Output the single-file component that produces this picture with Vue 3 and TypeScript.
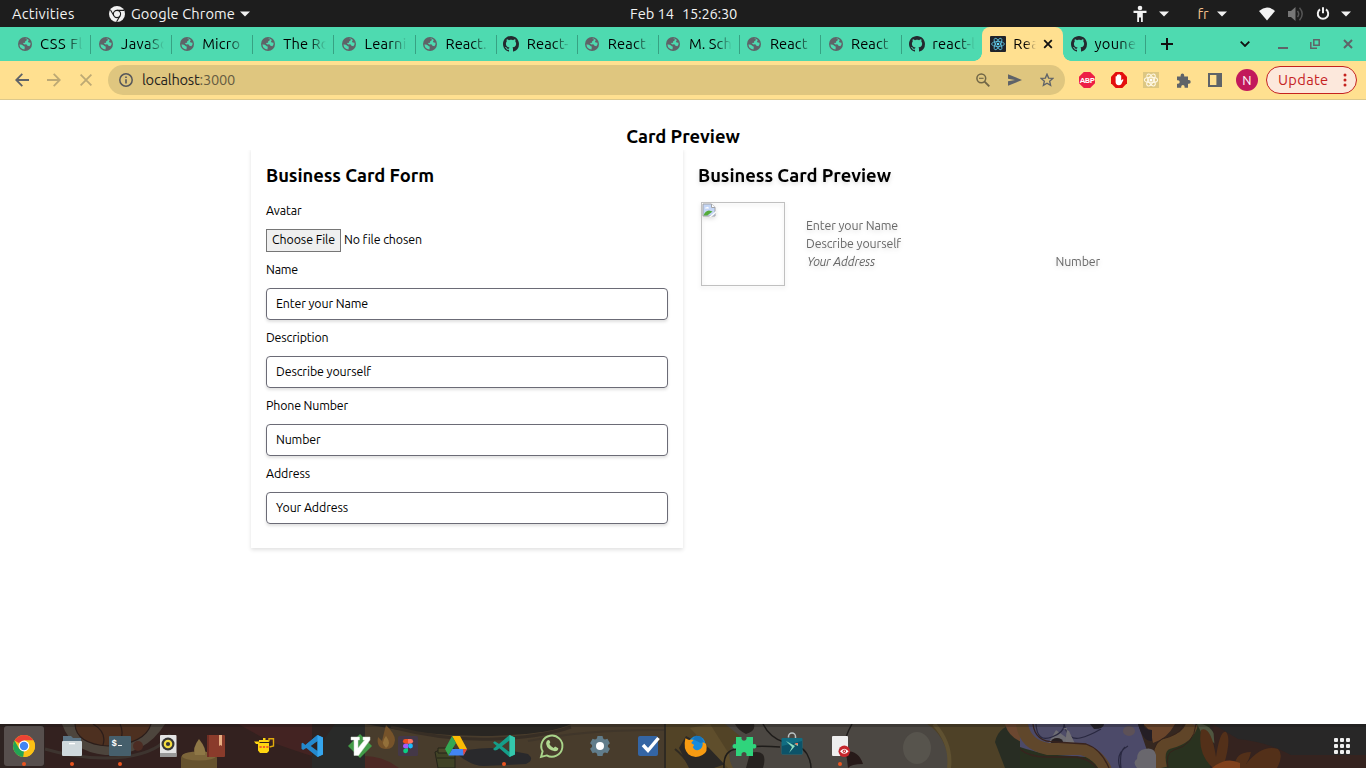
<script setup lang="ts">
import { reactive } from 'vue'

interface Tab {
  title: string
  width: number
  icon: 'globe' | 'github' | 'react'
  active?: boolean
}

interface Field {
  key: 'name' | 'description' | 'phone' | 'address'
  label: string
  labelWidth: number
}

const tabs: Tab[] = [
  { title: 'CSS Fl', width: 43, icon: 'globe' },
  { title: 'JavaSc', width: 46, icon: 'globe' },
  { title: 'Micro', width: 38, icon: 'globe' },
  { title: 'The Ro', width: 46, icon: 'globe' },
  { title: 'Learni', width: 42, icon: 'globe' },
  { title: 'React.', width: 41, icon: 'globe' },
  { title: 'React-', width: 42, icon: 'github' },
  { title: 'React -', width: 46, icon: 'globe' },
  { title: 'M. Sch', width: 43, icon: 'globe' },
  { title: 'React', width: 37.5, icon: 'globe' },
  { title: 'React', width: 37.5, icon: 'globe' },
  { title: 'react-l', width: 43, icon: 'github' },
  { title: 'Rea', width: 26, icon: 'react', active: true },
  { title: 'youne', width: 42, icon: 'github' },
]

const fields: Field[] = [
  { key: 'name', label: 'Name', labelWidth: 32 },
  { key: 'description', label: 'Description', labelWidth: 62.5 },
  { key: 'phone', label: 'Phone Number', labelWidth: 82 },
  { key: 'address', label: 'Address', labelWidth: 44 },
]

const card = reactive({
  name: { text: 'Enter your Name', width: 92 },
  description: { text: 'Describe yourself', width: 95 },
  phone: { text: 'Number', width: 44.5 },
  address: { text: 'Your Address', width: 72 },
})

// Tracks a line of text so that it fills the given width.
const vFit = {
  mounted(el: HTMLElement, binding: { value: number }) {
    const count = (el.textContent ?? '').length
    const natural = el.getBoundingClientRect().width
    el.style.letterSpacing = `${(binding.value - natural) / count}px`
  },
}
</script>

<template>
  <div class="desktop">
    <header class="topbar">
      <span class="activities"><span v-fit="62.5">Activities</span></span>
      <svg class="chrome-mono" width="16" height="16" viewBox="0 0 16 16">
        <circle cx="8" cy="8" r="8" fill="#f2f2f2" />
        <circle cx="8" cy="8" r="3.6" fill="none" stroke="#1d1d1d" stroke-width="1.1" />
        <path d="M8 4.4h7M4.9 9.8 1.5 3.9M11.1 9.8 7.6 15.8" stroke="#1d1d1d" stroke-width="1.1" />
      </svg>
      <span class="appname"><span v-fit="104">Google Chrome</span></span>
      <svg class="caret" width="10" height="6" viewBox="0 0 10 6"><path d="M0 .5h10L5 5.5z" fill="#f2f2f2" /></svg>
      <div class="clock"><span v-fit="44">Feb 14</span><span v-fit="55">15:26:30</span></div>
      <div class="status">
        <svg width="14" height="18" viewBox="0 0 14 18" fill="#f2f2f2">
          <circle cx="7" cy="3" r="2.3" /><path d="M.5 5.8h13v2.1H9.8V17H8v-4.5H6V17H4.2V7.9H.5z" />
        </svg>
        <svg class="c1" width="10" height="6" viewBox="0 0 10 6"><path d="M0 .5h10L5 5.5z" fill="#f2f2f2" /></svg>
        <span class="lang"><span v-fit="11">fr</span></span>
        <svg class="c2" width="10" height="6" viewBox="0 0 10 6"><path d="M0 .5h10L5 5.5z" fill="#f2f2f2" /></svg>
        <svg class="wifi" width="16" height="14" viewBox="0 0 16 14"><path d="M0 4Q8-3 16 4L8 13.5z" fill="#f2f2f2" /></svg>
        <svg class="volume" width="16" height="16" viewBox="0 0 16 16">
          <path d="M0 5h3l4.5-4v14L3 11H0z" fill="#777" />
          <path d="M9.5 5q2.4 3 0 6M11.5 1.8q5.4 6.2 0 12.4" fill="none" stroke="#555" stroke-width="1.5" />
        </svg>
        <svg class="power" width="14" height="14" viewBox="0 0 14 14" fill="none" stroke="#f2f2f2" stroke-width="2">
          <path d="M4 2.4a5.2 5.2 0 1 0 6 0M7 .3v6" />
        </svg>
        <svg class="c3" width="10" height="6" viewBox="0 0 10 6"><path d="M0 .5h10L5 5.5z" fill="#f2f2f2" /></svg>
      </div>
    </header>

    <nav class="tabstrip">
      <div v-for="(tab, i) in tabs" :key="i" class="tab" :class="{ active: tab.active, bare: i === 11 }">
        <svg v-if="tab.icon === 'globe'" class="favicon" width="16" height="16" viewBox="0 0 16 16">
          <circle cx="8" cy="8" r="7" fill="#5f6368" />
          <path d="M2.4 8.5Q4.8 8.2 6 9.6T7.8 10.4L7.5 13.6Q2.9 13 2.4 8.5ZM7.9 2.5 9.9 2.6 9.6 4.4 8.2 5.2 8 6.7 5.8 7.1 7.3 8.4 9.3 8.3 10.5 9.8 12.4 10.3Q14 8.6 13.5 6.7L11.6 6.5 10.9 5.2 12 4.1Q10.4 2.5 7.9 2.5Z" fill="#4edab0" />
        </svg>
        <svg v-else-if="tab.icon === 'github'" class="favicon" width="16" height="16" viewBox="0 0 16 16">
          <path fill="#24292f" d="M8 0C3.58 0 0 3.58 0 8c0 3.54 2.29 6.53 5.47 7.59.4.07.55-.17.55-.38 0-.19-.01-.82-.01-1.49-2.01.37-2.53-.49-2.69-.94-.09-.23-.48-.94-.82-1.13-.28-.15-.68-.52-.01-.53.63-.01 1.08.58 1.23.82.72 1.21 1.87.87 2.33.66.07-.52.28-.87.51-1.07-1.78-.2-3.64-.89-3.64-3.95 0-.87.31-1.59.82-2.15-.08-.2-.36-1.02.08-2.12 0 0 .67-.21 2.2.82.64-.18 1.32-.27 2-.27s1.36.09 2 .27c1.53-1.04 2.2-.82 2.2-.82.44 1.1.16 1.92.08 2.12.51.56.82 1.27.82 2.15 0 3.07-1.87 3.75-3.65 3.95.29.25.54.73.54 1.48 0 1.07-.01 1.93-.01 2.2 0 .21.15.46.55.38A8.01 8.01 0 0 0 16 8c0-4.42-3.58-8-8-8z" />
        </svg>
        <svg v-else class="favicon" width="16" height="16" viewBox="0 0 16 16">
          <rect width="16" height="16" rx="1" fill="#20232a" />
          <g fill="none" stroke="#61c9e8" stroke-width=".8">
            <ellipse cx="8" cy="8" rx="6.4" ry="2.5" />
            <ellipse cx="8" cy="8" rx="6.4" ry="2.5" transform="rotate(60 8 8)" />
            <ellipse cx="8" cy="8" rx="6.4" ry="2.5" transform="rotate(120 8 8)" />
          </g>
          <circle cx="8" cy="8" r="1.3" fill="#61dafb" />
        </svg>
        <span class="tab-title"><span v-fit="tab.width">{{ tab.title }}</span></span>
        <svg v-if="tab.active" class="close" width="10" height="10" viewBox="0 0 10 10"><path d="m1.2 1.2 7.6 7.6m0-7.6L1.2 8.8" stroke="#111" stroke-width="1.8" /></svg>
      </div>
      <div class="window-tools">
        <svg class="plus" width="12" height="12" viewBox="0 0 12 12"><path d="M6 0v12M0 6h12" stroke="#111" stroke-width="2" /></svg>
        <svg class="chev" width="10" height="6" viewBox="0 0 10 6"><path d="m.7.7 4.3 4.3L9.3.7" fill="none" stroke="#111" stroke-width="1.8" /></svg>
        <svg class="min" width="10" height="10" viewBox="0 0 10 10"><path d="M0 9h10" stroke="#5f6368" stroke-width="2" /></svg>
        <svg class="restore" width="10" height="10" viewBox="0 0 10 10" fill="none" stroke="#5f6368" stroke-width="1.5"><path d="M3.8.8h5.4v5.4H3.8zM.8 3v6.2H7" /></svg>
        <svg class="quit" width="10" height="10" viewBox="0 0 10 10"><path d="m1 1 8 8m0-8L1 9" stroke="#5f6368" stroke-width="2" /></svg>
      </div>
    </nav>

    <div class="toolbar">
      <svg class="back" width="14" height="14" viewBox="0 0 14 14" fill="none" stroke="#5f6368" stroke-width="1.8"><path d="M14 7H1.5M7.3.8 1.2 7l6.1 6.2" /></svg>
      <svg class="fwd" width="14" height="14" viewBox="0 0 14 14" fill="none" stroke="#bda974" stroke-width="1.8"><path d="M0 7h12.5M6.7.8 12.8 7l-6.1 6.2" /></svg>
      <svg class="stop" width="12" height="12" viewBox="0 0 12 12" fill="none" stroke="#bda974" stroke-width="1.8"><path d="m.6.6 10.8 10.8m0-10.8L.6 11.4" /></svg>
      <div class="omnibox">
        <svg width="14" height="14" viewBox="0 0 14 14"><circle cx="7" cy="7" r="6.2" fill="none" stroke="#55565a" stroke-width="1.5" /><path d="M7 6.2v4.2M7 3.4v1.6" stroke="#55565a" stroke-width="1.6" /></svg>
        <span class="url"><span v-fit="93">localhost<span class="port">:3000</span></span></span>
        <svg class="zoom" width="14" height="14" viewBox="0 0 14 14" fill="none" stroke="#706646"><circle cx="5.3" cy="5.3" r="4.4" stroke-width="1.5" /><path d="m8.6 8.6 4.7 4.7" stroke-width="1.9" /><path d="M3 5.3h4.6" stroke-width="1.1" /></svg>
        <svg class="send" width="14" height="12" viewBox="0 0 14 12"><path d="M0 .3 14 6 0 11.7V7.2L7 6 0 4.8z" fill="#5f6368" /></svg>
        <svg class="star" width="14" height="14" viewBox="0 0 14 14"><path d="m7 1.2 1.65 3.9 4.2.35-3.2 2.8.95 4.15L7 10.2l-3.6 2.2.95-4.15-3.2-2.8 4.2-.35z" fill="none" stroke="#5f6368" stroke-width="1.35" /></svg>
      </div>
      <div class="ext abp"><span v-fit="14.5">ABP</span></div>
      <svg class="hand" width="16" height="16" viewBox="0 0 16 16">
        <path d="M4.7 0h6.6L16 4.7v6.6L11.3 16H4.7L0 11.3V4.7z" fill="#e40d0d" />
        <path d="M4.6 8.2V4.5q.7-.9 1.3 0V3q.8-.9 1.4 0v-.6q.8-.9 1.5 0v1q.8-.8 1.4 0v5l1.1-1q1-.5 1.2.3L10.3 12.3q-.8 1-2.5 1-3.2-.2-3.2-3.2z" fill="#fff" />
      </svg>
      <svg class="react-ext" width="16" height="16" viewBox="0 0 16 16">
        <rect width="16" height="16" fill="#ddc782" />
        <g fill="none" stroke="#fff8e5" stroke-width="1.1"><ellipse cx="8" cy="8" rx="6.6" ry="2.7" /><ellipse cx="8" cy="8" rx="6.6" ry="2.7" transform="rotate(60 8 8)" /><ellipse cx="8" cy="8" rx="6.6" ry="2.7" transform="rotate(120 8 8)" /></g>
        <circle cx="8" cy="8" r="1.5" fill="#fff" />
      </svg>
      <svg class="puzzle" width="15" height="15" viewBox="0 0 15 15"><path d="M1 3.6h3.6V2.4a1.8 1.8 0 0 1 3.6 0v1.2H12v3.5h.9a1.8 1.8 0 0 1 0 3.6H12v4H8.6v-1a1.7 1.7 0 0 0-3.4 0v1H1v-4h1a1.7 1.7 0 0 0 0-3.4H1z" fill="#5f6368" /></svg>
      <svg class="panel" width="14" height="14" viewBox="0 0 14 14"><path d="M0 0h14v14H0zM2 2v10h6.4V2z" fill="#5f6368" fill-rule="evenodd" /></svg>
      <div class="avatar">N</div>
      <div class="update"><span v-fit="50.5">Update</span><svg width="4" height="14" viewBox="0 0 4 14" fill="#c5221f"><circle cx="2" cy="2" r="1.5" /><circle cx="2" cy="7" r="1.5" /><circle cx="2" cy="12" r="1.5" /></svg></div>
    </div>

    <main class="page">
      <h1><span v-fit="113.5">Card Preview</span></h1>
      <div class="columns">
        <section class="form-card">
          <h2><span v-fit="168">Business Card Form</span></h2>
          <label><span v-fit="35.5">Avatar</span></label>
          <div class="file"><button type="button"><span v-fit="63">Choose File</span></button><span class="file-name"><span v-fit="77.5">No file chosen</span></span></div>
          <template v-for="field in fields" :key="field.key">
            <label><span v-fit="field.labelWidth">{{ field.label }}</span></label>
            <div class="input"><span v-fit="card[field.key].width">{{ card[field.key].text }}</span></div>
          </template>
        </section>
        <section class="preview">
          <h2><span v-fit="193">Business Card Preview</span></h2>
          <div class="preview-body">
            <div class="picture">
              <svg width="14" height="14" viewBox="0 0 14 14">
                <path d="M1 1h8.5L13 4.5V13H1z" fill="#c4d6f6" stroke="#a2a4a8" />
                <path d="M9.5 1v3.5H13" fill="#fff" stroke="#a2a4a8" />
                <path d="M3 5.5q.3-1.6 1.8-1.2 1.5-1.3 2.2 1.2z" fill="#fff" />
                <path d="M1.5 12.5Q3 8.2 7 7.5l3.5 1-5.2 4z" fill="#55ab3a" />
                <path d="m14 8-7 6h2L14 9.7z" fill="#fff" />
              </svg>
            </div>
            <div class="details">
              <div><span v-fit="92">{{ card.name.text }}</span></div>
              <div><span v-fit="95">{{ card.description.text }}</span></div>
              <div class="contact"><em><span v-fit="68">{{ card.address.text }}</span></em><span v-fit="44.5">{{ card.phone.text }}</span></div>
            </div>
          </div>
        </section>
      </div>
    </main>

    <footer class="dock">
      <svg class="wallpaper" width="1366" height="44" viewBox="0 0 1366 44">
        <rect width="1366" height="44" fill="#2e2321" />
        <path d="M45 0h265v44H45z" fill="#33211f" />
        <path d="M62 0Q72 28 105 31 145 32 165 0z" fill="#4d453d" />
        <path d="M75 0Q76 20 108 22 145 20 151 0z" fill="#4d3020" />
        <path d="M75 0Q76 20 108 22 145 20 151 0M93 0q14 8 10 21M120 0q5 10-2 21" fill="none" stroke="#2b1d1a" stroke-width="1.2" />
        <path d="M45 25q40 12 80 8 35-5 45-23" fill="none" stroke="#3d342f" stroke-width="3" />
        <circle cx="138" cy="22" r="5" fill="#4c2c23" />
        <path d="M181 44v-10q0-6 18-6t18 6v10z" fill="#66522e" /><ellipse cx="199" cy="32" rx="17" ry="4.5" fill="#7c653a" />
        <path d="M199 15q8 10 6 16h-10q-3-7 4-16z" fill="#8e7746" />
        <path d="M238 0h74v32Q280 22 265 15z" fill="#432322" />
        <path d="M312 32 335 0h30v44h-53z" fill="#292a29" />
        <path d="M365 0h300v44H365z" fill="#483c2c" />
        <path d="M365 0h206q-20 10-80 12-60 1-126-12z" fill="#292622" />
        <path d="M391 3q55 14 104 12 48-2 76-12" fill="none" stroke="#372e25" stroke-width="3" />
        <path d="M386 1q9 9 9 15-1 10-10 9-9-1-7-12l4 4z" fill="#76532a" />
        <path d="M386 12q6 8 0 12-6-5 0-12z" fill="#93703a" />
        <path d="M365 32q18 0 34 12h-34z" fill="#4d2924" />
        <path d="M435 28q10-6 20 0v16h-17z" fill="#414326" stroke="#242419" /><path d="M437 34h18M438 24h16v5h-16z" fill="#4c492b" stroke="#242419" />
        <path d="M457 30q13-7 40-6l31 6q7 6-2 10l-42 2q-13 0-27-12z" fill="#29292c" />
        <path d="M528 17q60-12 137-11" fill="none" stroke="#40362a" stroke-width="2" />
        <path d="M665 0h85v44h-85z" fill="#524326" /><path d="M665 0v44M675 25q10 8 16 19" stroke="#2f2a22" stroke-width="2" fill="none" />
        <path d="m686 12 48 25-20 7h-25l-10-20z" fill="#2b2825" /><path d="m690 4 38 40h10L710 0z" fill="#5f4e2c" />
        <path d="M725 0h225v44H733q-10-18 7-32z" fill="#4b4742" />
        <path d="M735 0h19q2 7-8 10-8-4-11-10zm15 29q19-5 13 15h-17z" fill="#272320" />
        <path d="M763 0q7 14 21 18 18 3 23 12 4 7 4 14M724 44q-1-18 13-19 14-4 43-2M852 0q-12 21-5 33" fill="none" stroke="#1e1c1a" stroke-width="1.5" />
        <path d="M846 27q13 0 17 13-12 0-15 4z" fill="#271a19" />
        <ellipse cx="917" cy="24" rx="14" ry="16" fill="#57544d" />
        <path d="M927 0h94v44h-71q-3-32-23-44z" fill="#4e4127" /><path d="M934 0q18 20 15 44" fill="none" stroke="#5f5131" stroke-width="4" />
        <path d="M995 18q4-18 25-18v44h-15z" fill="#282d23" />
        <path d="M1005 0h22v20q-18-5-22-20z" fill="#6b4730" />
        <path d="M1020 0h190v44h-190z" fill="#4c4a69" />
        <path d="M1033 0h67q-8 18-25 20l-21-6-13 6z" fill="#4e4c68" /><path d="m1056 6 19 14h-27z" fill="#6d6c73" />
        <path d="M1036 0q1 19 16 13 13-5 12-13 4 17 16 14 9-2 21-9M1125 23q-6 5-4 21M1120 44q-5-15 8-22" fill="none" stroke="#292840" stroke-width="1.2" />
        <path d="M1063 4h4l-2 18h11l-7-15z" fill="#716f74" /><ellipse cx="1057" cy="18" rx="6" ry="4" fill="#251e20" />
        <path d="M1090 0h14q0 5-10 5z" fill="#242128" />
        <path d="M1020 23q25 8 37 8l44 3 6 10h-87z" fill="#28301f" />
        <path d="M1022 0q3 21 26 25h33q18 5 25 21" fill="none" stroke="#60472b" stroke-width="12" />
        <path d="M1020 25q9 8 27 8h30q15 3 20 12M1033 0q2 18 22 18l31 2q15 5 23 24" fill="none" stroke="#38231e" stroke-width="1.3" />
        <path d="M1138 0h54v44h-39z" fill="#352720" /><path d="M1158 44q-5-17 18-23 18-4 20-21h14v44z" fill="#29321f" />
        <path d="M1143 0h32q-8 15-22 19-1-12-10-19z" fill="#6a452b" />
        <path d="M1161 44q-5-22 8-25 20-5 23-19" fill="none" stroke="#604528" stroke-width="12" />
        <path d="M1154 44q-4-23 8-29 18-4 22-15M1168 44q-3-15 6-18 20-5 22-26" fill="none" stroke="#35221a" stroke-width="1" />
        <path d="M1137 44q-5-6 0-9 0-9 8-10 9-2 11 6v13z" fill="#69676d" /><ellipse cx="1129" cy="7" rx="6" ry="5" fill="#5d5157" />
        <path d="M1138 0q5 18 14 17V6q-10-1-8-6z" fill="#241e25" />
        <path d="M1197 0q17-1 21 22l-16-12z" fill="#4f5640" />
        <path d="M1213 0h153v44h-150z" fill="#35231f" /><path d="M1213 0h153v31h-75q-23-13-53-16z" fill="#282727" />
        <path d="M1201 6q10-5 15 27 4-27 10-25 6 7-3 36h-10q-16-14-12-38zm34 38q-1-16 16-16-2 8-5 12 16-20 32-15 6 6-1 19z" fill="#533019" />
        <path d="M1212 44q14-12 28-5v5z" fill="#80411c" />
        <path d="M0 0h1366v3H0z" fill="#111" opacity=".25" />
      </svg>
      <div class="items">
        <div class="item current">
          <svg viewBox="0 0 32 32"><circle cx="16" cy="16" r="11" fill="#fbc116" /><path d="M16 16 6.5 10.5A11 11 0 0 1 25.5 10.5H16z" fill="#ea4335" /><path d="M6.5 10.5 11.2 18.8 16 21l-.8 6A11 11 0 0 1 6.5 10.5z" fill="#23a455" /><path d="M16 10.5h9.5A11 11 0 0 1 15.4 27l5.2-8.5z" fill="#fbc116" /><circle cx="16" cy="16" r="5.4" fill="#fff" /><circle cx="16" cy="16" r="4.2" fill="#4285f4" /></svg><i />
        </div>
        <div class="item"><svg viewBox="0 0 32 32"><path d="M7 6h8l2 2h8v5H7z" fill="#5c7485" /><rect x="6" y="11" width="20" height="15" rx="1" fill="#cfd8dc" /><path d="M13 13.6h6" stroke="#fff" stroke-width="1.4" /></svg><i /></div>
        <div class="item"><svg viewBox="0 0 32 32"><rect x="5" y="6" width="22" height="20" rx="1" fill="#465f6c" /><path d="M14 15.5h4" stroke="#f2f2f2" /><text x="7.5" y="15.5" font-family="Liberation Mono" font-size="9" font-weight="bold" fill="#fff">$</text></svg><i /></div>
        <div class="item"><svg viewBox="0 0 32 32"><rect x="8" y="5" width="16.5" height="22" rx="1" fill="#e4e4e4" /><path d="M8 23h16.5v4H8z" fill="#999" /><circle cx="16" cy="14" r="6.5" fill="#373737" /><circle cx="16" cy="14" r="3.2" fill="none" stroke="#f4dc40" stroke-width="2.2" /></svg></div>
        <div class="item"><svg viewBox="0 0 32 32"><rect x="7" y="5" width="18" height="22" rx="1" fill="#8a3b2b" /><path d="M7 5h2v22H7z" fill="#6f2d23" /><path d="M19 5h3v11l-1.5-1-1.5 1z" fill="#e9ae82" /></svg></div>
        <div class="item"><svg viewBox="0 0 32 32"><path d="M6 11.5h5.5v1.5H21v8l-2 2h-7l-2-2.5V14H8zM11 10h10v2H11zM15 8h2.5v2H15z" fill="#ffd510" /><path d="M21 11.5V8.7h4.5V16l-4 1" fill="none" stroke="#e1aa0b" stroke-width="1.4" /><path d="M11.5 17h9" stroke="#f06424" stroke-width="2.2" stroke-dasharray="2.2 1.2" /></svg></div>
        <div class="item"><svg viewBox="0 0 32 32"><path d="m21.5 5 5.5 2.4v17.2L21.5 27 9.4 17.2 6.8 19.3 5.5 18.5v-5l1.3-.7 2.6 2.1zM21.5 11 14.7 16l6.8 5z" fill="#2489ce" fill-rule="evenodd" /><path d="M5.5 18.5 21.5 5v6L7 20z" fill="#2489ce" /><path d="m21.5 5 5.5 2.4v17.2L21.5 27z" fill="#35a6ee" /></svg></div>
        <div class="item"><svg viewBox="0 0 32 32"><path d="m16 4 12 12-12 12L4 16z" fill="#439b48" /><path d="M7 7h8.5v3H14v8l6.5-8H19V7h7v3L14.5 25.500H10V10H7z" fill="#fff" stroke="#cfdbcd" stroke-width=".5" /></svg></div>
        <div class="item"><svg viewBox="0 0 32 32"><rect x="6" y="6" width="20" height="20" rx="1.5" fill="#443848" /><path d="M13.3 9H16v4.7h-2.7a2.35 2.35 0 0 1 0-4.7z" fill="#f24e1e" /><path d="M16 9h2.7a2.35 2.35 0 0 1 0 4.7H16z" fill="#ff7262" /><path d="M13.3 13.7H16v4.7h-2.7a2.35 2.35 0 0 1 0-4.7z" fill="#a259ff" /><circle cx="18.5" cy="16" r="2.4" fill="#1abcfe" /><path d="M13.3 18.4H16v2.4a2.4 2.4 0 1 1-2.7-2.4z" fill="#0acf83" /></svg></div>
        <div class="item"><svg viewBox="0 0 32 32"><path d="M12 6h8l7 13h-7.5z" fill="#fbbc04" /><path d="m12 6 4 7L8.5 25.5 5 19z" fill="#34a853" /><path d="M12.4 19H27l-3.5 6.5h-15z" fill="#4285f4" /><path d="M23 19h4l-3.5 6.5z" fill="#ea4335" /></svg></div>
        <div class="item"><svg viewBox="0 0 32 32"><path d="m21.5 5 5.5 2.4v17.2L21.5 27 5 12.8l1.8-1.6 3.2 2L21.5 22V10.5L9 20l-2.2.5L5 19z" fill="#159e89" /><path d="m21.5 5 5.5 2.4v17.2L21.5 27z" fill="#34c7ac" /></svg><i /></div>
        <div class="item"><svg viewBox="0 0 32 32"><path d="m5 27 1.6-5.7A10.6 10.6 0 1 1 10.7 25.4z" fill="none" stroke="#a9d48a" stroke-width="1.9" /><path d="M11.6 10.2q1.8-1 2.7 2l-.9 1.8q1.3 2.8 4.2 4.1l1.5-1.5 3.2 1.6q0 3-3.4 3.1-7.8-1.5-8.8-7.6-.1-2.1 1.5-3.5z" fill="#b1d991" /></svg></div>
        <div class="item"><svg viewBox="0 0 32 32"><g fill="#617d8b"><circle cx="16" cy="16" r="8" /><path d="M13.5 6h5l1 4h-7zM12.5 22h7l-1 4h-5z" /><path d="M13.5 6h5l1 4h-7zM12.5 22h7l-1 4h-5z" transform="rotate(60 16 16)" /><path d="M13.5 6h5l1 4h-7zM12.5 22h7l-1 4h-5z" transform="rotate(120 16 16)" /></g><circle cx="16" cy="16" r="4" fill="#fff" /></svg></div>
        <div class="item"><svg viewBox="0 0 32 32"><rect x="6" y="6" width="20" height="20" rx="2" fill="#3465a4" /><path d="m11 15 5 5.5L26.5 8" fill="none" stroke="#fff" stroke-width="3.4" /></svg></div>
        <div class="item"><svg viewBox="0 0 32 32"><circle cx="17" cy="14.5" r="8.5" fill="#168bdc" /><path d="M5.4 8.2 9 10q2.5-1.1 4.6.1l-2.4 3 3 1.8-1.3 2.2q1 3.6 5.5 3 5-1.6 4.2-8.2l3.3 1.8q2.8 8-3.5 11.3-7.5 4.5-14-.7-5.5-5.5-3-16.1z" fill="#f79b12" /><path d="m13 9 3-3.5 5 1.4 3 5-3.5 1z" fill="#1775be" /></svg></div>
        <div class="item"><svg viewBox="0 0 32 32"><path d="M8 7h5.5v2a2.7 2.7 0 0 0 5 0V7H25v7.3a2.3 2.3 0 1 1 0 4V26h-6.5v-2.3a2.7 2.7 0 0 0-5 0V26H8v-7.7a2.3 2.3 0 1 1 0-4z" fill="#2fd47c" /></svg></div>
        <div class="item"><svg viewBox="0 0 32 32"><path d="M12.5 7.5V6.5a3.5 3.5 0 0 1 7 0V8" fill="none" stroke="#b9c1c3" stroke-width="1.5" /><rect x="5.5" y="8" width="21" height="16.5" rx="1" fill="#116d82" /><path d="m6 16 20-5v13H6z" fill="#0c5369" /><path d="m10 11 9 5-6 7 3-6zM18 14l4-1v3z" fill="#8dddc0" /><path d="m19 13 3 0-1 2.5z" fill="#ff694f" /></svg></div>
        <div class="item"><svg viewBox="0 0 32 32"><rect x="8" y="6" width="16" height="20" rx="1" fill="#eee" /><circle cx="20.3" cy="21.3" r="5.8" fill="#c5262c" /><path d="M16 21.3q4.3-5 8.6 0-4.3 5-8.6 0z" fill="#fff" /><circle cx="20.3" cy="21.3" r="1.7" fill="#c5262c" /><circle cx="20.3" cy="21.3" r=".7" fill="#fff" /></svg><i /></div>
      </div>
      <div class="launcher"><b v-for="n in 9" :key="n" /></div>
    </footer>
  </div>
</template>

<style>
html,
body {
  margin: 0;
  overflow: hidden;
}
</style>

<style scoped>
.desktop {
  width: 1366px;
  height: 768px;
  display: flex;
  flex-direction: column;
  overflow: hidden;
  background: #fff;
  color: #000;
  font-family: "Ubuntu", "Noto Sans", sans-serif;
  font-size: 12.4px;
}
.desktop * { box-sizing: border-box; }
.desktop span { white-space: pre; }
svg { display: block; flex: none; }
.topbar {
  height: 27px;
  flex: none;
  display: flex;
  align-items: center;
  background: #1d1d1d;
  color: #f2f2f2;
  font-size: 14.67px;
}
.activities { width: 97px; padding-left: 12px; }
.chrome-mono { margin-left: 12px; }
.appname { width: 104px; margin-left: 6px; }
.caret { margin-left: 5px; }
.clock { display: flex; gap: 8px; margin-left: 380px; }
.status { display: flex; align-items: center; margin-left: 396px; }
.c1 { margin-left: 11.5px; }
.lang { width: 11px; margin-left: 29px; color: #f3c18c; }
.c2 { margin-left: 8px; }
.wifi { margin-left: 32px; }
.volume { margin-left: 13px; }
.power { margin-left: 12px; }
.c3 { margin-left: 11px; }
.tabstrip {
  height: 34px;
  flex: none;
  display: flex;
  padding-left: 9px;
  background: #4edab0;
  font-size: 14.67px;
}
.tab {
  position: relative;
  width: 81.12px;
  flex: none;
  display: flex;
  align-items: center;
  padding-left: 7.5px;
}
.tab::after {
  content: "";
  position: absolute;
  right: -1px;
  top: 8px;
  width: 1px;
  height: 19px;
  background: #37a283;
}
.tab.active::after, .tab.bare::after { display: none; }
.tab.active { background: #ffe090; border-radius: 8px 8px 0 0; }
.tab.active::before {
  content: "";
  position: absolute;
  left: -8px;
  right: -8px;
  bottom: 0;
  height: 8px;
  background:
    radial-gradient(circle at 0 0, transparent 7.5px, #ffe090 8px) left / 8px 8px no-repeat,
    radial-gradient(circle at 100% 0, transparent 7.5px, #ffe090 8px) right / 8px 8px no-repeat;
}
.tab-title {
  width: 43px;
  margin-left: 7.5px;
  overflow: hidden;
  line-height: 20px;
  mask-image: linear-gradient(90deg, #000 60%, transparent);
}
.active .tab-title { width: 23px; mask-image: linear-gradient(90deg, #000 50%, transparent); }
.close { margin-left: 7px; }
.window-tools { display: flex; align-items: center; margin-left: 16.3px; }
.chev { margin-left: 67px; }
.min { margin-left: 28px; }
.restore { margin-left: 22px; }
.quit { margin-left: 23px; }
.toolbar {
  height: 39px;
  flex: none;
  display: flex;
  align-items: center;
  padding-left: 15px;
  background: #ffe090;
  border-bottom: 1px solid #dcc88c;
}
.fwd { margin-left: 18px; }
.stop { margin-left: 19px; }
.omnibox {
  width: 957px;
  height: 30px;
  flex: none;
  display: flex;
  align-items: center;
  margin-left: 16px;
  padding-left: 11px;
  border-radius: 15px;
  background: #dfc67f;
  font-size: 14.67px;
}
.url { width: 94px; margin-left: 9px; color: #25231d; }
.url > span { position: relative; top: -1px; }
.port { color: #665c41; }
.zoom { margin-left: 740px; }
.send { margin-left: 18px; }
.star { margin-left: 18px; }
.abp {
  width: 16px;
  height: 16px;
  flex: none;
  display: flex;
  align-items: center;
  justify-content: center;
  margin-left: 14px;
  background: #ed1e45;
  clip-path: polygon(30% 0, 70% 0, 100% 30%, 100% 70%, 70% 100%, 30% 100%, 0 70%, 0 30%);
  color: #fff;
  font-size: 8px;
  font-weight: 700;
}
.hand, .react-ext { margin-left: 16px; }
.puzzle { margin-left: 16.5px; }
.panel { margin-left: 17.5px; }
.avatar {
  width: 22px;
  height: 22px;
  margin-left: 14px;
  border-radius: 50%;
  background: #c2185b;
  color: #fff;
  font-size: 13px;
  line-height: 22px;
  text-align: center;
}
.update {
  width: 91px;
  height: 28px;
  display: flex;
  align-items: center;
  gap: 14px;
  margin-left: 8px;
  padding: 0 0 1px 11px;
  border: 1px solid #c5221f;
  border-radius: 14px;
  background: #fce8dc;
  color: #c5221f;
  font-size: 14.67px;
}
.page {
  height: 624px;
  flex: none;
  display: flex;
  flex-direction: column;
  align-items: center;
  padding-top: 24px;
}
h1, h2 { margin: 0; font-size: 18.4px; line-height: 24px; font-weight: 700; }
.columns { display: flex; width: 864px; height: 400px; }
.form-card {
  width: 432px;
  display: flex;
  flex-direction: column;
  padding: 15px;
  box-shadow: 0 2px 4px rgba(0, 0, 0, .12);
  clip-path: inset(2px -6px -8px -6px);
}
.form-card label { height: 18px; line-height: 18px; margin: 8px 0 10px; }
.form-card h2 + label { margin-top: 14px; }
.file { height: 23px; display: flex; gap: 3px; line-height: 21px; }
.file button {
  width: 75px;
  height: 23px;
  padding: 0 5px 2px;
  border: 1px solid #767676;
  background: #efefef;
  color: #000;
  font: inherit;
  line-height: 19px;
  text-align: left;
}
.input {
  height: 32px;
  flex: none;
  padding-left: 9px;
  border: 1px solid #6b6b76;
  border-radius: 4px;
  line-height: 29px;
  box-shadow: 0 2px 3px rgba(0, 0, 0, .12);
}
.preview { width: 432px; padding: 15px; filter: drop-shadow(0 2px 2px rgba(0, 0, 0, .13)); }
.preview-body { display: flex; margin: 15px 0 0 3px; }
.picture { width: 84px; height: 84px; padding: 0; border: 1px solid #c0c0c0; }
.details { width: 294px; margin: 14px 0 0 21px; line-height: 18px; color: #686868; }
.contact { display: flex; justify-content: space-between; }
.contact em { padding-left: 1px; }
.dock { position: relative; height: 44px; flex: none; display: flex; overflow: hidden; }
.wallpaper { position: absolute; inset: 0; filter: blur(.4px); }
.items { position: relative; display: flex; }
.item {
  position: relative;
  width: 48px;
  height: 44px;
  display: flex;
  justify-content: center;
  padding-top: 6px;
}
.item svg { position: relative; width: 32px; height: 32px; }
.item.current::before {
  content: "";
  position: absolute;
  inset: 2px 4px;
  border-radius: 3px;
  background: rgba(255, 255, 255, .2);
}
.item i {
  position: absolute;
  left: 22px;
  top: 38px;
  width: 4px;
  height: 4px;
  border-radius: 50%;
  background: #e95420;
}
.launcher {
  position: relative;
  display: grid;
  grid-template-columns: repeat(3, 4px);
  grid-auto-rows: 4px;
  gap: 2px;
  margin: 14px 16px 0 auto;
}
.launcher b { width: 3.5px; height: 3.5px; border-radius: 1px; background: #eee; }
</style>
